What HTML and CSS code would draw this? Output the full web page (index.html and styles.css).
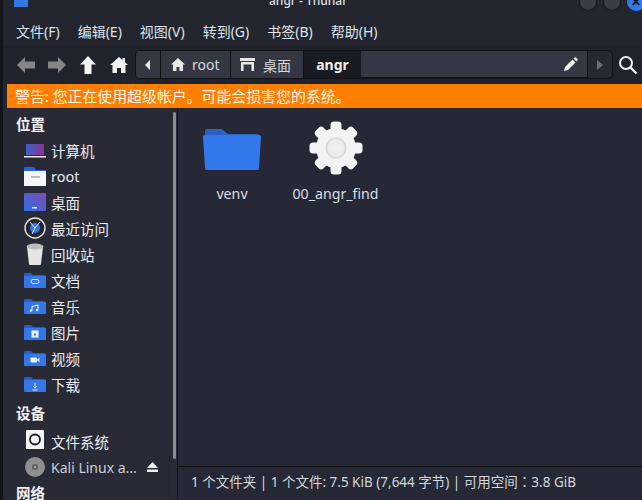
FILE: index.html
```html
<!DOCTYPE html>
<html lang="zh">
<head>
<meta charset="utf-8">
<title>angr - Thunar</title>
<link rel="stylesheet" href="styles.css">
</head>
<body>
<svg width="0" height="0" class="defs">
  <defs>
    <symbol id="folder" viewBox="0 0 22 16">
      <path d="M0 2a1 1 0 0 1 1-1h6l2 2h11a1 1 0 0 1 1 1v3H0z" fill="#2a5cc0"/>
      <path d="M0 4h22v11a1 1 0 0 1-1 1H1a1 1 0 0 1-1-1z" fill="#3478e8"/>
    </symbol>
  </defs>
</svg>
<div class="window">
  <header class="titlebar">
    <span class="app-square"></span>
    <span class="title">angr - Thunar</span>
    <span class="wm-buttons">
      <span class="wm-btn"></span>
      <span class="wm-btn"></span>
      <span class="wm-btn wm-close">✕</span>
    </span>
  </header>
  <nav class="menubar">
    <span>文件(F)</span><span>编辑(E)</span><span>视图(V)</span><span>转到(G)</span><span>书签(B)</span><span>帮助(H)</span>
  </nav>
  <div class="toolbar">
    <svg class="tool-icon" width="18" height="16" viewBox="0 0 18 16"><path d="M0 8l8-8v4.500h10v7H8V16z" fill="#858585"/></svg>
    <svg class="tool-icon" width="18" height="16" viewBox="0 0 18 16"><path d="M18 8l-8-8v4.500H0v7h10V16z" fill="#858585"/></svg>
    <svg class="tool-icon" width="16" height="18" viewBox="0 0 16 18"><path d="M8 0l8 8.500h-4.500V18h-7V8.500H0z" fill="#f2f2f2"/></svg>
    <svg class="tool-icon" width="18" height="16" viewBox="0 0 18 16"><path d="M9 0l3.500 3V1h2.500v4.200L18 8h-2.500v8h-4.500v-5H7v5H2.500V8H0z" fill="#f2f2f2"/></svg>
    <div class="pathbar">
      <span class="seg seg-back"><svg width="6" height="10" viewBox="0 0 6 10"><path d="M5 0v10L0 5z" fill="#e8e8e8"/></svg></span>
      <span class="seg seg-root"><svg width="14" height="13" viewBox="0 0 14 13"><path d="M7 0l7 6.500h-2V13H8.500V9h-3v4H2V6.500H0z" fill="#e8e8e8"/></svg>root</span>
      <span class="seg seg-desk"><svg width="15" height="13" viewBox="0 0 15 13"><path d="M0 0h15v3H0zM1 4h13v9h-2.500V6.500h-8V13H1z" fill="#e8e8e8"/></svg>桌面</span>
      <span class="seg seg-current">angr</span>
      <span class="seg-entry"><svg width="14" height="14" viewBox="0 0 14 14"><path d="M0 14l1-4 7.500-7.500 3 3L4 13zM9.500 1.500l1-1a1 1 0 0 1 1.400 0l1.600 1.600a1 1 0 0 1 0 1.400l-1 1z" fill="#f0f0f0"/></svg></span>
      <span class="seg-next"><svg width="6" height="10" viewBox="0 0 6 10"><path d="M0 0v10l6-5z" fill="#6d7078"/></svg></span>
    </div>
    <svg class="search" width="20" height="20" viewBox="0 0 20 20"><circle cx="8" cy="8" r="6" fill="none" stroke="#f0f0f0" stroke-width="2"/><path d="M12.500 12.500l6 6" stroke="#f0f0f0" stroke-width="2.400"/></svg>
  </div>
  <div class="warning">警告: 您正在使用超级帐户。可能会损害您的系统。</div>
  <div class="content">
    <aside class="sidebar">
      <div class="places">
        <h2 class="group">位置</h2>
        <div class="place">
          <svg class="pi" width="22" height="16" viewBox="0 0 22 16"><defs><linearGradient id="lap" x1="0" x2="1"><stop offset="0" stop-color="#3d62c8"/><stop offset="1" stop-color="#8a3390"/></linearGradient></defs><rect x="2" y="2" width="18" height="11" fill="url(#lap)"/><rect y="14" width="22" height="1.500" fill="#f0f0f0"/></svg>
          <span>计算机</span>
        </div>
        <div class="place">
          <svg class="pi" width="22" height="20" viewBox="0 0 22 20"><path d="M0 2a1 1 0 0 1 1-1h9l2 3h10v4H0z" fill="#2a65d8"/><rect y="5" width="22" height="15" fill="#f6f6f6"/><rect x="7" y="10" width="9" height="2" fill="#bdbdbd"/></svg>
          <span>root</span>
        </div>
        <div class="place">
          <svg class="pi" width="22" height="18" viewBox="0 0 22 18"><defs><linearGradient id="desk" x1="0" y1="1" x2="1" y2="0"><stop offset="0" stop-color="#2f6fe6"/><stop offset="1" stop-color="#7c4bb0"/></linearGradient></defs><rect width="22" height="18" rx="1" fill="url(#desk)"/><rect x="8" y="14" width="5" height="1.500" fill="#dfe7fa"/></svg>
          <span>桌面</span>
        </div>
        <div class="place">
          <svg class="pi" width="22" height="22" viewBox="0 0 22 22"><circle cx="11" cy="11" r="10" fill="#23262f" stroke="#e6e6e6" stroke-width="1.400"/><circle cx="11" cy="11" r="5" fill="#3478e8"/><path d="M6 5l5 6 5-6M11 11l-3 6" stroke="#e8e8e8" stroke-width="1" fill="none"/></svg>
          <span>最近访问</span>
        </div>
        <div class="place">
          <svg class="pi" width="18" height="22" viewBox="0 0 18 22"><path d="M1 4h16l-2 17a1 1 0 0 1-1 1H4a1 1 0 0 1-1-1z" fill="#e4e4e4"/><ellipse cx="9" cy="3.500" rx="8.500" ry="3" fill="#bcbcbc"/></svg>
          <span>回收站</span>
        </div>
        <div class="place">
          <svg class="pi" width="22" height="16"><use href="#folder"/><rect x="7" y="7.500" width="8" height="4" rx="2" fill="none" stroke="#dce7fb"/></svg>
          <span>文档</span>
        </div>
        <div class="place">
          <svg class="pi" width="22" height="16"><use href="#folder"/><path d="M8 8.500l6-1.500v5M8 8.500v4" stroke="#e8f0fd" fill="none"/><circle cx="7" cy="12.500" r="1.200" fill="#e8f0fd"/><circle cx="13" cy="12" r="1.200" fill="#e8f0fd"/></svg>
          <span>音乐</span>
        </div>
        <div class="place">
          <svg class="pi" width="22" height="16"><use href="#folder"/><rect x="7.500" y="6.500" width="7" height="7" fill="#e8f0fd"/><rect x="10" y="9.500" width="2" height="2" fill="#3478e8"/></svg>
          <span>图片</span>
        </div>
        <div class="place">
          <svg class="pi" width="22" height="16"><use href="#folder"/><rect x="6.500" y="7.500" width="6.500" height="5" rx="1" fill="#f2f6fe"/><path d="M13 9.500l2.500-1.500v4L13 10.500z" fill="#f2f6fe"/></svg>
          <span>视频</span>
        </div>
        <div class="place">
          <svg class="pi" width="22" height="16"><use href="#folder"/><path d="M11 7v5M9 10l2 2.200 2-2.200M8.500 14h5" stroke="#dce7fb" fill="none"/></svg>
          <span>下载</span>
        </div>
        <h2 class="group group-dev">设备</h2>
        <div class="place">
          <svg class="pi" width="18" height="22" viewBox="0 0 18 22"><rect width="18" height="22" rx="1" fill="#f4f4f4"/><circle cx="9" cy="9.500" r="5" fill="none" stroke="#1c1c1c" stroke-width="1.800"/><rect y="19" width="18" height="3" fill="#2a2a2a"/></svg>
          <span>文件系统</span>
        </div>
        <div class="place">
          <svg class="pi" width="20" height="20" viewBox="0 0 20 20"><circle cx="10" cy="10" r="10" fill="#8f8f8f"/><circle cx="10" cy="10" r="3" fill="#5e5e5e"/><circle cx="10" cy="10" r="1.200" fill="#a8a8a8"/></svg>
          <span class="dev-name">Kali Linux a...</span>
          <svg class="eject" width="11" height="10" viewBox="0 0 11 10"><path d="M5.500 0L11 6H0zM0 7.500h11V10H0z" fill="#f0f0f0"/></svg>
        </div>
        <h2 class="group group-net">网络</h2>
      </div>
      <div class="scrollbar"><span class="thumb"></span></div>
    </aside>
    <main class="main">
      <div class="grid">
        <figure class="file">
          <svg width="58" height="42" viewBox="0 0 58 42"><path d="M2 3a2 2 0 0 1 2-2h15l6 5h29a2 2 0 0 1 2 2v8H2z" fill="#2b5fc4"/><path d="M0 9a2 2 0 0 1 2-2h54a2 2 0 0 1 2 2l-2 31a2 2 0 0 1-2 2H4a2 2 0 0 1-2-2z" fill="#3479ec"/></svg>
          <figcaption>venv</figcaption>
        </figure>
        <figure class="file">
          <svg width="56" height="56" viewBox="-28 -28 56 56">
            <defs><radialGradient id="hole"><stop offset="0" stop-color="#f2f2f2"/><stop offset=".75" stop-color="#ececec"/><stop offset="1" stop-color="#cfcfcf"/></radialGradient></defs>
            <g fill="#f3f3f3">
              <circle r="20"/>
              <rect x="-5.500" y="-26.500" width="11" height="53" rx="3.500"/>
              <rect x="-5.500" y="-26.500" width="11" height="53" rx="3.500" transform="rotate(45)"/>
              <rect x="-5.500" y="-26.500" width="11" height="53" rx="3.500" transform="rotate(90)"/>
              <rect x="-5.500" y="-26.500" width="11" height="53" rx="3.500" transform="rotate(135)"/>
            </g>
            <circle r="10.500" fill="url(#hole)"/>
          </svg>
          <figcaption>00_angr_find</figcaption>
        </figure>
      </div>
      <footer class="status">1 个文件夹 | 1 个文件: 7.5 KiB (7,644 字节) | 可用空间<span lang="ja">：</span>3.8 GiB</footer>
    </main>
  </div>
</div>
</body>
</html>
```
FILE: styles.css
```css
* { box-sizing: border-box; }
html, body { margin: 0; height: 100%; overflow: hidden; }
body { background: #14151a; font-family: "Noto Sans", "Noto Sans CJK SC", sans-serif; font-size: 14px; color: #dfe3ea; }
.defs { position: absolute; }
.window { width: 642px; height: 500px; margin-left: 3px; background: #23262f; display: flex; flex-direction: column; overflow: hidden; }

.titlebar { height: 18px; flex: none; display: flex; position: relative; }
.app-square { width: 14px; height: 7px; margin-left: 11px; background: #3478e8; }
.title { position: absolute; left: 266px; top: -8px; font-size: 12px; font-weight: 500; color: #dfe3ea; }
.wm-buttons { position: absolute; left: 576px; top: -7px; display: flex; gap: 6px; }
.wm-btn { width: 18px; height: 18px; border-radius: 50%; background: #3a3d47; border: 1px solid #15161b; }
.wm-close { background: #3478e8; border: none; color: #10131c; font-size: 12px; font-weight: 700; line-height: 18px; text-align: center; }

.menubar { height: 28px; flex: none; display: flex; align-items: center; gap: 18px; padding: 0 0 2px 13px; font-size: 14px; color: #dde3ec; }
.menubar span { white-space: nowrap; }

.toolbar { height: 38px; flex: none; display: flex; align-items: center; background: #20232b; padding: 0 0 1px 14px; }
.tool-icon { flex: none; margin-right: 13px; }
.tool-icon:nth-child(2), .tool-icon:nth-child(3) { margin-right: 14px; }
.tool-icon:nth-child(4) { margin-right: 7px; }
.pathbar { width: 478px; height: 29px; flex: none; display: flex; border: 1px solid #111318; border-radius: 5px; background: #262932; font-size: 14px; overflow: hidden; }
.seg { display: flex; align-items: center; background: #353843; border-right: 1px solid #111318; height: 100%; color: #d5d8df; white-space: nowrap; }
.seg-back { width: 25px; justify-content: center; }
.seg-root { width: 70px; padding-left: 10px; gap: 7px; }
.seg-desk { width: 73px; padding-left: 9px; gap: 8px; }
.seg-current { width: 57px; justify-content: center; background: #191b22; color: #f0f0f0; font-weight: 700; border-right: none; }
.seg-entry { flex: 1; background: #353843; display: flex; align-items: center; justify-content: flex-end; padding-right: 9px; border-right: 1px solid #111318; border-bottom: 1px solid #111318; }
.seg-next { width: 24px; display: flex; align-items: center; justify-content: center; }
.search { flex: none; margin-left: 5px; }

.warning { height: 24px; flex: none; margin-left: 4px; padding-left: 8px; background: #ff8000; color: #fbf3e8; font-size: 14.900px; line-height: 24px; white-space: nowrap; }

.content { flex: 1; min-height: 0; display: flex; }
.sidebar { width: 175px; flex: none; display: flex; background: #282a36; margin-top: 1px; border-right: 1px solid #15161b; }
.places { flex: 1; min-width: 0; overflow: hidden; padding-left: 5px; }
.group { margin: 0; height: 28px; line-height: 30px; font-size: 14.500px; font-weight: 700; padding-left: 8px; color: #f0f0f0; }
.group-dev { height: 30px; line-height: 30px; margin-top: 1px; }
.group-net { margin: 0; height: 26px; line-height: 26px; }
.place { height: 26px; display: flex; align-items: center; position: relative; padding-left: 43px; font-size: 14.500px; color: #e8eaef; white-space: nowrap; }
.pi { position: absolute; top: 50%; transform: translate(-50%, -50%); left: 27px; }
.dev-name { color: #c9ced8; font-size: 14px; }
.eject { margin-left: 10px; }
.scrollbar { width: 8px; flex: none; padding: 3px 2px 0 3px; border-left: 1px solid #23262f; }
.thumb { display: block; width: 3px; height: 347px; border-radius: 2px; background: #8b8d93; }

.main { flex: 1; min-width: 0; display: flex; flex-direction: column; background: #262935; }
.grid { flex: 1; min-height: 0; display: flex; padding: 12px 0 0 0; }
.file { margin: 0; width: 105px; display: flex; flex-direction: column; align-items: center; font-size: 14.200px; color: #d8dde6; }
.file:first-child { width: 108px; padding-top: 8px; }
.file:first-child + .file { margin-left: -3px; }
.file figcaption { margin-top: 8px; white-space: nowrap; }
.file:first-child figcaption { margin-top: 14px; }
.status { height: 34px; flex: none; border-top: 1px solid #14151a; padding-left: 13px; line-height: 31px; font-size: 13.500px; color: #d2d6de; white-space: nowrap; font-family: "Noto Sans", "Noto Sans CJK JP", sans-serif; }
```
